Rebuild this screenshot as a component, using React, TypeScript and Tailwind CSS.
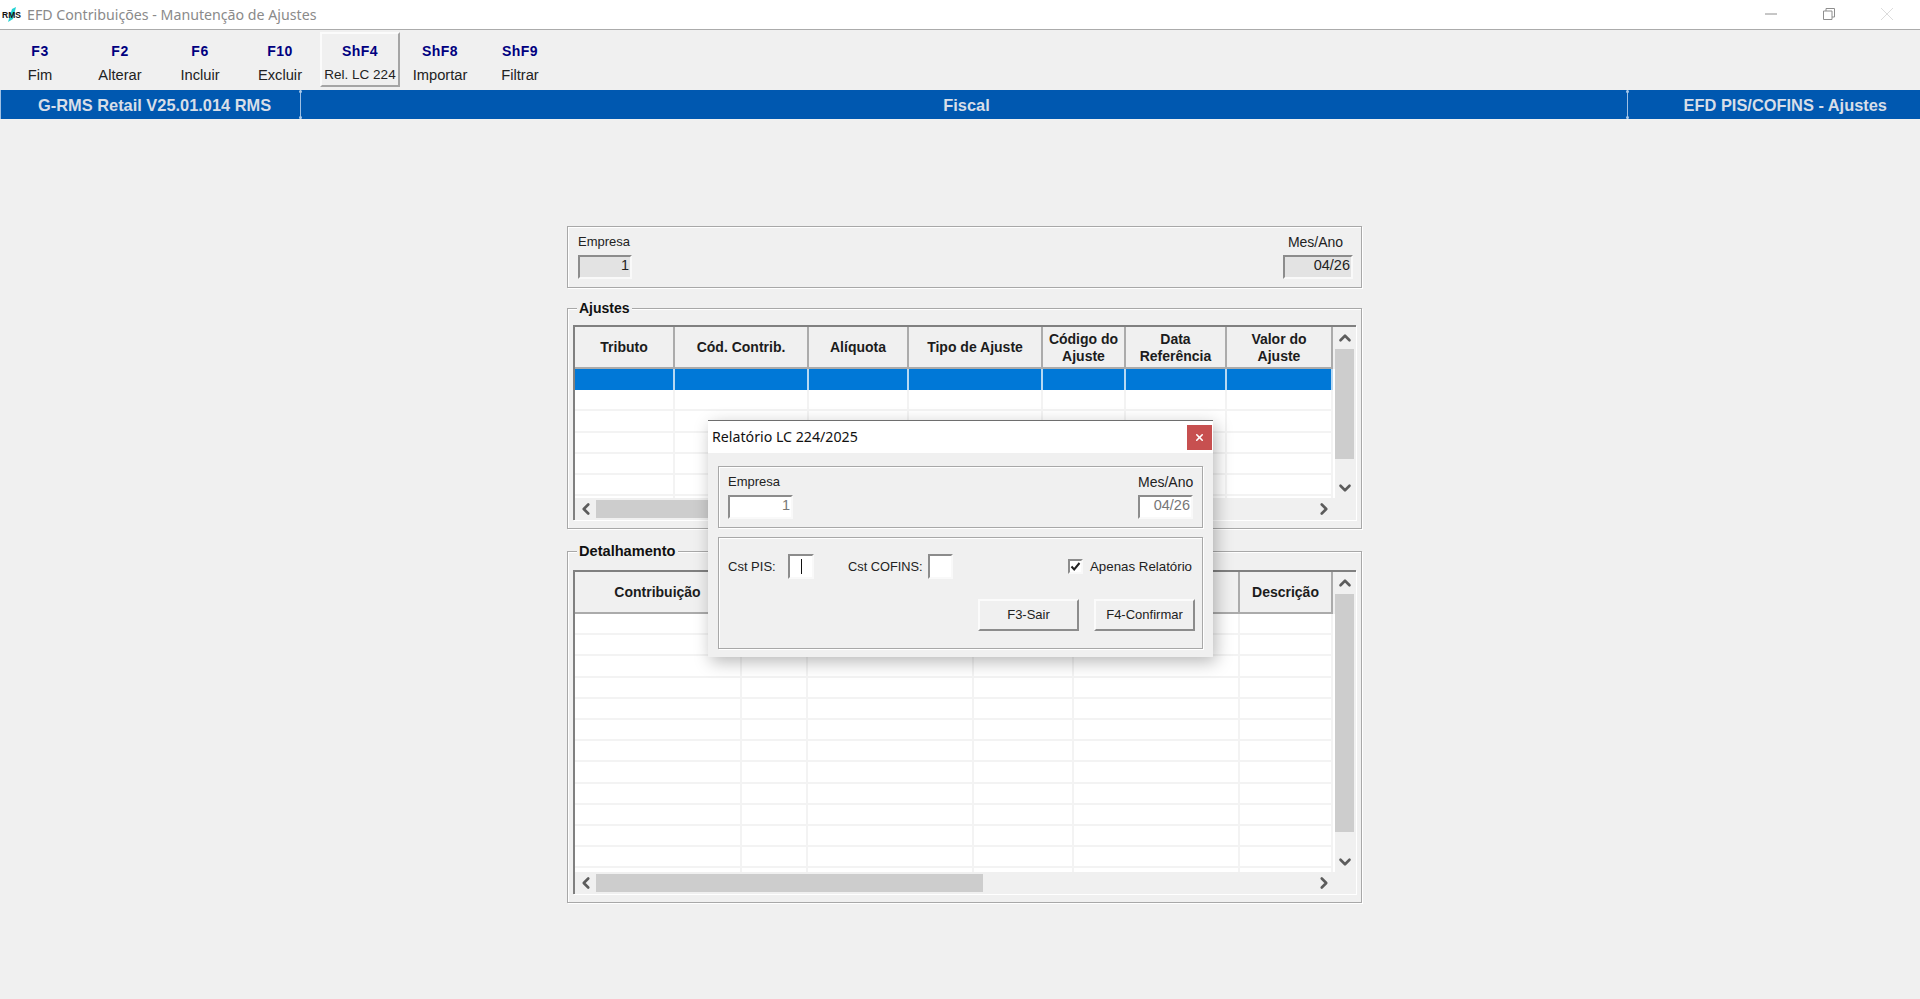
import { ChevronDown, ChevronLeft, ChevronRight, ChevronUp, X } from "lucide-react";

const toolbarItems = [
  { key: "F3", label: "Fim" },
  { key: "F2", label: "Alterar" },
  { key: "F6", label: "Incluir" },
  { key: "F10", label: "Excluir" },
  { key: "ShF4", label: "Rel. LC 224", active: true },
  { key: "ShF8", label: "Importar" },
  { key: "ShF9", label: "Filtrar" },
];

const etched = "border border-[#a8a8a8] shadow-[inset_1px_1px_0_#ffffff,1px_1px_0_#ffffff]";
const sunken = "border-2 border-t-[#8c8c8c] border-l-[#8c8c8c] border-r-[#f9f9f9] border-b-[#f9f9f9]";
const raised = "border-2 border-t-[#fbfbfb] border-l-[#fbfbfb] border-r-[#8c8c8c] border-b-[#8c8c8c]";

function Field({
  label,
  value,
  className,
  labelClassName,
  disabled,
}: {
  label: string;
  value: string;
  className: string;
  labelClassName: string;
  disabled?: boolean;
}) {
  return (
    <div className={className}>
      <div className={`h-[16px] text-[#222] ${labelClassName}`}>{label}</div>
      <div
        className={`mt-[5px] h-[24px] pr-px text-right text-[14.5px] leading-[16px] ${sunken} ${
          disabled ? "bg-[#e3e3e3] text-[#222]" : "bg-white text-[#777]"
        }`}
      >
        {value}
      </div>
    </div>
  );
}

function HeaderCell({ children }: { children: React.ReactNode }) {
  return (
    <div className="flex items-center justify-center border-r-2 border-b-2 border-[#ababab] pt-px text-center text-[14px] leading-[17px] font-bold text-[#1c1c1c]">
      {children}
    </div>
  );
}

function DataGrid({
  columns,
  headers,
  rowCount,
  selected,
  className,
  thumbH,
  thumbV,
}: {
  columns: string;
  headers: React.ReactNode[];
  rowCount: number;
  selected?: boolean;
  className: string;
  thumbH: string;
  thumbV: string;
}) {
  return (
    <div className={`flex border-t-2 border-l-2 border-t-[#808080] border-l-[#808080] shadow-[1px_1px_0_#ffffff] ${className}`}>
      <div className="flex w-[760px] flex-col">
        <div className="min-h-0 flex-1 overflow-hidden bg-white">
          <div className={`grid h-[42px] bg-[#f0f0f0] ${columns}`}>
            {headers.map((h, i) => (
              <HeaderCell key={i}>{h}</HeaderCell>
            ))}
          </div>
          {Array.from({ length: rowCount }).map((_, r) => (
            <div key={r} className={`grid h-[21.2px] ${columns}`}>
              {headers.map((_, c) => (
                <div
                  key={c}
                  className={
                    selected && r === 0
                      ? "border-r-2 border-r-[#b7d8f2] bg-[#0078d7]"
                      : "border-r-2 border-b-2 border-[#f3f3f3]"
                  }
                />
              ))}
            </div>
          ))}
        </div>
        <div className="flex h-[22px] shrink-0 items-center bg-[#f0f0f0]">
          <div className="flex w-[21px] justify-center">
            <ChevronLeft size={18} strokeWidth={3.5} className="text-[#5c5c5c]" />
          </div>
          <div className={`h-[18px] bg-[#cdcdcd] ${thumbH}`} />
          <div className="flex-1" />
          <div className="mr-[1px] flex w-[21px] justify-center">
            <ChevronRight size={18} strokeWidth={3.5} className="text-[#5c5c5c]" />
          </div>
        </div>
      </div>
      <div className="flex w-[19px] flex-col">
        <div className="flex h-[22px] items-center justify-center">
          <ChevronUp size={18} strokeWidth={3.5} className="text-[#5c5c5c]" />
        </div>
        <div className={`w-full bg-[#cdcdcd] ${thumbV}`} />
        <div className="flex-1" />
        <div className="flex h-[44px] items-start justify-center pt-[3px]">
          <ChevronDown size={18} strokeWidth={3.5} className="text-[#5c5c5c]" />
        </div>
      </div>
    </div>
  );
}

function GroupTitle({ children, className }: { children: React.ReactNode; className: string }) {
  return (
    <div className={`ml-[4px] -mt-[9px] h-[17px] w-fit bg-[#f0f0f0] px-[2px] leading-[17px] font-bold text-[#111] ${className}`}>
      {children}
    </div>
  );
}

// little round grips at the ends of the status bar dividers
function Grips() {
  return (
    <>
      <span className="absolute top-0 -left-[2px] h-[3px] w-[3px] rounded-full bg-[#a9c9ea]" />
      <span className="absolute bottom-0 -left-[2px] h-[3px] w-[3px] rounded-full bg-[#a9c9ea]" />
    </>
  );
}

function Dialog() {
  return (
    <div className="absolute top-[420px] left-[708px] h-[237px] w-[505px] border-t border-t-[#6e6e6e] bg-[#f0f0f0] shadow-[3px_5px_16px_rgba(0,0,0,0.28)]">
      <div className="flex h-[32px] items-center bg-white pl-[4px]">
        <span className="pb-px font-['Noto_Sans',sans-serif] text-[14.2px] text-[#111]">Relatório LC 224/2025</span>
        <div className="mr-px ml-auto flex h-[25px] w-[25px] items-center justify-center bg-[#c75050]">
          <X size={11} strokeWidth={3.5} className="text-white" />
        </div>
      </div>
      <div className="px-[10px] pt-[13px]">
        <div className={`flex h-[62px] justify-between pt-[7px] pr-[9px] pl-[9px] ${etched}`}>
          <Field label="Empresa" value="1" className="w-[65px]" labelClassName="text-left text-[13px] leading-[16px]" />
          <Field label="Mes/Ano" value="04/26" className="w-[55px]" labelClassName="text-center text-[14px] leading-[16px] whitespace-nowrap" />
        </div>
        <div className={`mt-[9px] h-[112px] pt-[16px] pl-[9px] ${etched}`}>
          <div className="flex h-[25px] items-center text-[13px] text-[#222]">
            <span className="w-[60px]">Cst PIS:</span>
            <div className={`flex h-[25px] w-[26px] items-center justify-center bg-white ${sunken}`}>
              <div className="h-[15px] w-px bg-[#111]" />
            </div>
            <span className="ml-[34px] w-[80px] text-[12.8px]">Cst COFINS:</span>
            <div className={`h-[25px] w-[25px] bg-white ${sunken}`} />
            <div className={`ml-[115px] flex h-[15px] w-[15px] items-center justify-center bg-white ${sunken}`}>
              <svg viewBox="0 0 11 11" className="h-[11px] w-[11px]">
                <path d="M1.5 5.5 L4.2 8.5 L9.5 2" fill="none" stroke="#222" strokeWidth="2" />
              </svg>
            </div>
            <span className="ml-[7px] text-[13.3px]">Apenas Relatório</span>
          </div>
          <div className="mt-[20px] flex justify-end gap-[15px] pr-[7px]">
            <div className={`flex h-[32px] w-[101px] items-center justify-center text-[13px] text-[#222] ${raised}`}>F3-Sair</div>
            <div className={`flex h-[32px] w-[101px] items-center justify-center text-[13px] text-[#222] ${raised}`}>F4-Confirmar</div>
          </div>
        </div>
      </div>
    </div>
  );
}

export default function App() {
  return (
    <div className="relative flex h-[999px] w-[1920px] flex-col overflow-hidden bg-[#f0f0f0] font-['Liberation_Sans',Arial,sans-serif]">
      {/* Title bar */}
      <div className="flex h-[30px] shrink-0 items-center border-b border-b-[#ababab] bg-white">
        <svg viewBox="0 0 24 16" className="ml-[1px] h-[16px] w-[24px]">
          <path d="M7 15 L11 2 L15 0 L12 12 Z" fill="#22d3d3" />
          <text x="1" y="11" fontSize="8.5" fontWeight="700" fontFamily="Liberation Sans, sans-serif" fill="#111">RMS</text>
        </svg>
        <span className="ml-[2px] font-['Noto_Sans',sans-serif] text-[14.2px] text-[#8a8a8a]">EFD Contribuições - Manutenção de Ajustes</span>
        <div className="ml-auto flex pr-[4px] pb-[1px]">
          <div className="flex h-[14px] w-[58px] items-center justify-center">
            <svg viewBox="0 0 12 12" className="h-[12px] w-[12px]"><path d="M0 6 H12" stroke="#8e8e8e" strokeWidth="1" /></svg>
          </div>
          <div className="flex h-[14px] w-[58px] items-center justify-center">
            <svg viewBox="0 0 12 12" className="h-[12px] w-[12px]">
              <path d="M0.5 3 H9 V11.5 H0.5 Z M3 3 V0.5 H11.5 V9 H9" fill="none" stroke="#8e8e8e" strokeWidth="1" />
            </svg>
          </div>
          <div className="flex h-[14px] w-[58px] items-center justify-center">
            <svg viewBox="0 0 12 12" className="h-[12px] w-[12px]"><path d="M0 0 L12 12 M12 0 L0 12" stroke="#dcdcdc" strokeWidth="1" /></svg>
          </div>
        </div>
      </div>

      {/* Toolbar */}
      <div className="flex h-[60px] shrink-0 items-start pt-[2px]">
        {toolbarItems.map((item) => (
          <div
            key={item.key}
            className={`flex h-[55px] w-[80px] flex-col items-center border-2 pt-[9px] ${
              item.active ? "border-t-[#fbfbfb] border-r-[#a5a5a5] border-b-[#a5a5a5] border-l-[#fbfbfb]" : "border-transparent"
            }`}
          >
            <span className="text-[14px] leading-[16px] font-bold tracking-[0.5px] text-[#000080]">{item.key}</span>
            <span className={`mt-[8px] leading-[16px] whitespace-nowrap text-[#222] ${item.active ? "text-[13.5px]" : "text-[14.7px]"}`}>{item.label}</span>
          </div>
        ))}
      </div>

      {/* Blue status bar */}
      <div className="flex h-[29px] shrink-0 bg-[#0058b0] text-[16.4px] font-bold text-[#d7dee8]">
        <div className="flex h-full w-[301px] items-center border-x border-x-[#9fc0e4] pt-px pl-[37px]">G-RMS Retail V25.01.014 RMS</div>
        <div className="relative flex h-full w-[1326px] items-center justify-center pt-px pl-[5px]">
          <Grips />
          Fiscal
        </div>
        <div className="relative flex h-full flex-1 items-center justify-end border-l border-l-[#9fc0e4] pt-px pr-[33px]">
          <Grips />
          EFD PIS/COFINS - Ajustes
        </div>
      </div>

      {/* Main form */}
      <div className="ml-[567px] flex w-[795px] flex-col pt-[107px]">
        <div className={`flex h-[62px] justify-between pt-[7px] pr-[8px] pl-[10px] ${etched}`}>
          <Field label="Empresa" value="1" disabled className="w-[54px]" labelClassName="text-left text-[13px] leading-[16px]" />
          <Field label="Mes/Ano" value="04/26" disabled className="w-[70px]" labelClassName="pr-[5px] text-center text-[14px] leading-[16px]" />
        </div>

        <div className={`mt-[20px] h-[221px] pl-[5px] ${etched}`}>
          <GroupTitle className="text-[14px]">Ajustes</GroupTitle>
          <DataGrid
            className="mt-[8px] h-[195px] w-[783px]"
            columns="grid-cols-[100px_134px_100px_134px_83px_101px_106px]"
            headers={["Tributo", "Cód. Contrib.", "Alíquota", "Tipo de Ajuste", <>Código do<br />Ajuste</>, <>Data<br />Referência</>, <>Valor do<br />Ajuste</>]}
            rowCount={7}
            selected
            thumbH="w-[400px]"
            thumbV="h-[110px]"
          />
        </div>

        <div className={`mt-[22px] h-[352px] pl-[5px] ${etched}`}>
          <GroupTitle className="text-[14.6px]">Detalhamento</GroupTitle>
          <DataGrid
            className="mt-[10px] h-[324px] w-[783px]"
            columns="grid-cols-[167px_66px_166px_100px_166px_93px]"
            headers={["Contribuição", "", "", "", "", "Descrição"]}
            rowCount={13}
            thumbH="w-[387px]"
            thumbV="h-[238px]"
          />
        </div>
      </div>

      <Dialog />
    </div>
  );
}
